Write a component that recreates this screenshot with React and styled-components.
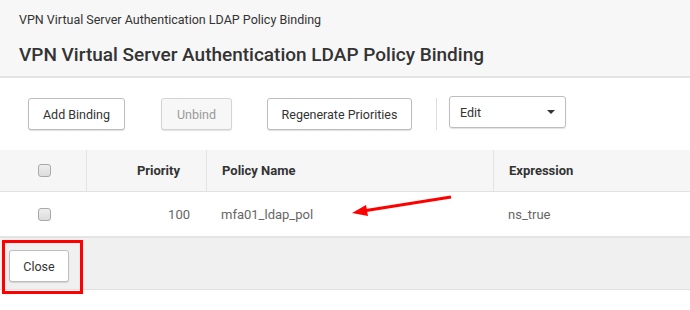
import React from "react";
import styled, { createGlobalStyle } from "styled-components";

const GlobalStyle = createGlobalStyle`
  body {
    margin: 0;
    background: #ffffff;
    font-family: Roboto, "Liberation Sans", sans-serif;
    color: #333333;
  }
`;

const Page = styled.div`
  position: relative;
  width: 690px;
  height: 310px;
  overflow: hidden;
  background: #ffffff;
`;

const Header = styled.div`
  background: #f7f7f7;
  border-bottom: 2px solid #e4e4e4;
  height: 78px;
  box-sizing: border-box;
  padding: 12px 19px 0;
`;

const Breadcrumb = styled.div`
  font-size: 12.5px;
  color: #333;
  line-height: 16px;
`;

const Title = styled.h1`
  margin: 15px 0 0;
  font-size: 19px;
  font-weight: 500;
  color: #333;
  line-height: 24px;
`;

const Toolbar = styled.div`
  display: flex;
  align-items: center;
  height: 72px;
  padding-left: 28px;
  box-sizing: border-box;
`;

const Button = styled.button`
  width: ${(p) => p.$w}px;
  height: 32px;
  padding: 0;
  margin-right: ${(p) => (p.$gap === undefined ? 35 : p.$gap)}px;
  border: 1px solid #bdbdbd;
  border-radius: 3px;
  background: ${(p) => (p.disabled ? "#f7f7f7" : "#ffffff")};
  color: ${(p) => (p.disabled ? "#999" : "#333")};
  border-color: ${(p) => (p.disabled ? "#d4d4d4" : "#bdbdbd")};
  font-family: inherit;
  font-size: 12.5px;
  box-shadow: 0 1px 1px rgba(0, 0, 0, 0.12);
`;

const Separator = styled.div`
  width: 1px;
  height: 32px;
  background: #dddddd;
  margin-right: 12px;
`;

const Select = styled.div`
  display: flex;
  align-items: center;
  justify-content: space-between;
  width: 117px;
  height: 32px;
  margin-top: -4px;
  box-sizing: border-box;
  padding: 0 10px 0 10px;
  border: 1px solid #bdbdbd;
  border-radius: 3px;
  font-size: 12.5px;
  color: #333;
  box-shadow: 0 1px 1px rgba(0, 0, 0, 0.12);
`;

const Caret = styled.span`
  width: 0;
  height: 0;
  border-left: 4px solid transparent;
  border-right: 4px solid transparent;
  border-top: 4px solid #333;
`;

const Row = styled.div`
  display: grid;
  grid-template-columns: 86px 120px 287px 1fr;
  height: ${(p) => (p.$head ? 41 : 44)}px;
  background: ${(p) => (p.$head ? "#f6f6f6" : "#ffffff")};
  border-bottom: ${(p) => (p.$head ? "1px solid #e2e2e2" : "2px solid #e4e4e4")};
`;

const Cell = styled.div`
  display: flex;
  align-items: center;
  justify-content: ${(p) => (p.$right ? "flex-end" : "flex-start")};
  padding: ${(p) => (p.$right ? `0 ${p.$head ? 26 : 16}px 0 0` : "0 0 0 15px")};
  border-left: ${(p) => (p.$line ? "1px solid #e4e4e4" : "none")};
  font-size: 13px;
  font-weight: ${(p) => (p.$head ? 700 : 400)};
  color: ${(p) => (p.$head ? "#333" : "#666")};
`;

const CheckCell = styled(Cell)`
  justify-content: center;
  padding: 0 0 0 3px;
`;

const Check = styled.span`
  display: block;
  width: 11px;
  height: 11px;
  border: 1px solid #a9a9a9;
  border-radius: 3px;
  background: linear-gradient(#eeeeee, #dcdcdc);
`;

const Footer = styled.div`
  background: #f0f0f0;
  border-bottom: 1px solid #e0e0e0;
  height: 52px;
  padding: 12px 0 0 9px;
  box-sizing: border-box;
`;

const Highlight = styled.div`
  position: absolute;
  left: 2px;
  top: 240px;
  width: 81px;
  height: 54px;
  box-sizing: border-box;
  border: 3px solid #ff0000;
`;

const Arrow = styled.svg`
  position: absolute;
  left: 345px;
  top: 190px;
`;

export default function App() {
  return (
    <Page>
      <GlobalStyle />
      <Header>
        <Breadcrumb>VPN Virtual Server Authentication LDAP Policy Binding</Breadcrumb>
        <Title>VPN Virtual Server Authentication LDAP Policy Binding</Title>
      </Header>
      <Toolbar>
        <Button $w={97} $gap={36}>Add Binding</Button>
        <Button disabled $w={71} $gap={35}>Unbind</Button>
        <Button $w={145} $gap={24}>Regenerate Priorities</Button>
        <Separator />
        <Select>
          <span>Edit</span>
          <Caret />
        </Select>
      </Toolbar>
      <Row $head>
        <CheckCell>
          <Check />
        </CheckCell>
        <Cell $head $line $right>Priority</Cell>
        <Cell $head $line>Policy Name</Cell>
        <Cell $head $line>Expression</Cell>
      </Row>
      <Row>
        <CheckCell>
          <Check />
        </CheckCell>
        <Cell $right>100</Cell>
        <Cell>mfa01_ldap_pol</Cell>
        <Cell>ns_true</Cell>
      </Row>
      <Footer>
        <Button $w={60} $gap={0}>Close</Button>
      </Footer>
      <Highlight />
      <Arrow width="115" height="30" viewBox="0 0 115 30">
        <line x1="106" y1="7" x2="18" y2="21" stroke="#ff0000" strokeWidth="3" />
        <polygon points="7,23 21,15 23,26" fill="#ff0000" />
      </Arrow>
    </Page>
  );
}
